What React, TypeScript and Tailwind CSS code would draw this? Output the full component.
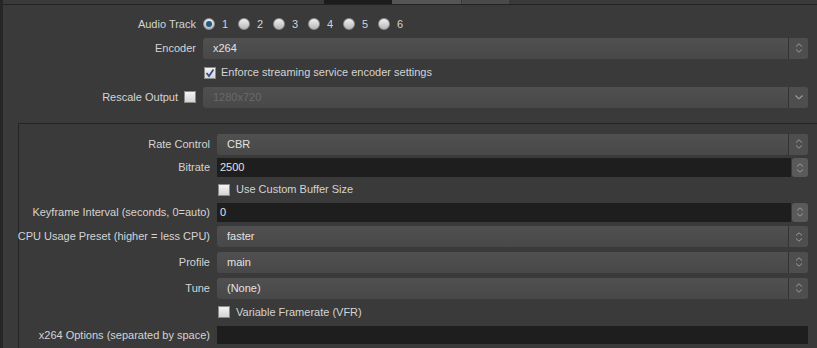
import React from "react";

const font = { fontFamily: '"Liberation Sans", Arial, sans-serif' };

function UpDown() {
  return (
    <svg width="10" height="12" viewBox="0 0 10 12">
      <path d="M2 4.5 L5 1.8 L8 4.5" fill="none" stroke="#9a9a9a" strokeWidth="1" />
      <path d="M2 7.5 L5 10.2 L8 7.5" fill="none" stroke="#9a9a9a" strokeWidth="1" />
    </svg>
  );
}

function Combo({ value, disabled = false, single = false }: { value: string; disabled?: boolean; single?: boolean }) {
  return (
    <div className="flex h-[21px] flex-1 items-stretch rounded-[3px] bg-gradient-to-b from-[#505050] to-[#484848]">
      <div className={`flex flex-1 items-center pl-[10px] ${disabled ? "text-[#6a6a6a]" : "text-[#e2e2e2]"}`}>{value}</div>
      <div className="flex w-[20px] items-center justify-center rounded-r-[3px] border-l border-[#333333] bg-[#4e4e4e]">
        {single ? (
          <svg width="10" height="8" viewBox="0 0 10 8">
            <path d="M1.5 2.5 L5 5.8 L8.5 2.5" fill="none" stroke="#a0a0a0" strokeWidth="1.1" />
          </svg>
        ) : (
          <UpDown />
        )}
      </div>
    </div>
  );
}

function Spin({ value }: { value: string }) {
  return (
    <div className="flex h-[19px] flex-1 items-stretch">
      <div className="flex flex-1 items-center bg-[#1e1e1e] pl-[3px] text-[#e2e2e2]">{value}</div>
      <div className="ml-[1px] flex w-[16px] items-center justify-center rounded-[3px] bg-[#5a5a5a]">
        <UpDown />
      </div>
    </div>
  );
}

function Check({ checked = false }: { checked?: boolean }) {
  return (
    <div className="flex h-[12px] w-[12px] shrink-0 items-center justify-center border border-[#8a8a8a] bg-gradient-to-b from-[#f4f4f4] to-[#d4d4d4]">
      {checked && (
        <svg width="10" height="10" viewBox="0 0 10 10">
          <path d="M1.5 5 L4 8 L8.5 1.5" fill="none" stroke="#2c4f8a" strokeWidth="1.8" />
        </svg>
      )}
    </div>
  );
}

function Radio({ checked = false }: { checked?: boolean }) {
  return (
    <div className="flex h-[12px] w-[12px] shrink-0 items-center justify-center rounded-full border border-[#8c8c8c] bg-gradient-to-b from-[#f0f0f0] to-[#b8b8b8]">
      {checked && <div className="h-[6px] w-[6px] rounded-full bg-[#1f5a86]" />}
    </div>
  );
}

function Row({ label, h, children, lw }: { label: React.ReactNode; h: number; children: React.ReactNode; lw: number }) {
  return (
    <div className="flex items-center" style={{ height: h }}>
      <div className="flex shrink-0 items-center justify-end whitespace-nowrap text-right text-[#d4d4d4]" style={{ width: lw }}>
        {label}
      </div>
      <div className="ml-[7px] flex flex-1 items-center">{children}</div>
    </div>
  );
}

export default function App() {
  return (
    <div className="h-[348px] w-[817px] overflow-hidden bg-[#3a3a3a] text-[11px] leading-none" style={font}>
      <div className="flex h-full">
        <div className="w-[3px] shrink-0 bg-[#262626]" />
        <div className="flex flex-1 flex-col">
          {/* tabs strip */}
          <div className="flex h-[5px] border-b border-[#222222]">
            <div className="w-[321px]" />
            <div className="w-[68px] bg-[#1c1c1c]" />
            <div className="w-[69px] bg-[#555555]" />
            <div className="w-[48px] border-l border-[#3a3a3a] bg-[#4a4a4a]" />
          </div>

          <div className="pr-[9px] pt-[7px]">
            <Row label="Audio Track" h={24} lw={193}>
              <div className="flex items-center">
                {["1", "2", "3", "4", "5", "6"].map((n, i) => (
                  <div key={n} className="flex w-[35px] items-center gap-[7px] text-[#d4d4d4]">
                    <Radio checked={i === 0} />
                    <span>{n}</span>
                  </div>
                ))}
              </div>
            </Row>
            <Row label="Encoder" h={24} lw={193}>
              <Combo value="x264" />
            </Row>
            <Row label="" h={25} lw={193}>
              <div className="flex items-center gap-[5px] pl-[1px] text-[#d4d4d4]">
                <Check checked />
                <span>Enforce streaming service encoder settings</span>
              </div>
            </Row>
            <Row
              label={
                <div className="flex items-center gap-[6px]">
                  <span>Rescale Output</span>
                  <Check />
                </div>
              }
              h={24}
              lw={193}
            >
              <Combo value="1280x720" disabled single />
            </Row>
          </div>

          <div className="ml-[15px] mt-[14px] flex-1 border-l border-t border-[#252525] pr-[9px] pt-[8px]">
            <Row label="Rate Control" h={24} lw={191}>
              <Combo value="CBR" />
            </Row>
            <Row label="Bitrate" h={23} lw={191}>
              <Spin value="2500" />
            </Row>
            <Row label="" h={21} lw={191}>
              <div className="flex items-center gap-[6px] pl-[1px] text-[#d4d4d4]">
                <Check />
                <span>Use Custom Buffer Size</span>
              </div>
            </Row>
            <Row label="Keyframe Interval (seconds, 0=auto)" h={24} lw={191}>
              <Spin value="0" />
            </Row>
            <Row label="CPU Usage Preset (higher = less CPU)" h={25} lw={191}>
              <Combo value="faster" />
            </Row>
            <Row label="Profile" h={26} lw={191}>
              <Combo value="main" />
            </Row>
            <Row label="Tune" h={26} lw={191}>
              <Combo value="(None)" />
            </Row>
            <Row label="" h={22} lw={191}>
              <div className="flex items-center gap-[6px] pl-[1px] text-[#d4d4d4]">
                <Check />
                <span>Variable Framerate (VFR)</span>
              </div>
            </Row>
            <Row label="x264 Options (separated by space)" h={24} lw={191}>
              <div className="h-[18px] flex-1 bg-[#1e1e1e]" />
            </Row>
          </div>
        </div>
      </div>
    </div>
  );
}
